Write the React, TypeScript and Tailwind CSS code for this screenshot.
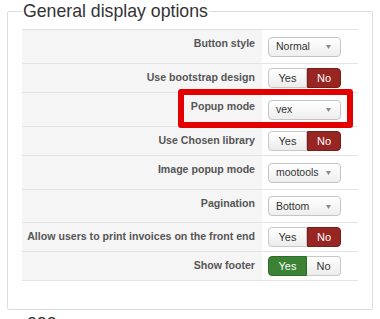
import React from "react";

type Row =
  | { label: string; kind: "select"; value: string; h: string }
  | { label: string; kind: "toggle"; yes: boolean; h: string };

const rows: Row[] = [
  { label: "Button style", kind: "select", value: "Normal", h: "h-[34px]" },
  { label: "Use bootstrap design", kind: "toggle", yes: false, h: "h-[29px]" },
  { label: "Popup mode", kind: "select", value: "vex", h: "h-[34px]" },
  { label: "Use Chosen library", kind: "toggle", yes: false, h: "h-[29px]" },
  { label: "Image popup mode", kind: "select", value: "mootools", h: "h-[34px]" },
  { label: "Pagination", kind: "select", value: "Bottom", h: "h-[33px]" },
  { label: "Allow users to print invoices on the front end", kind: "toggle", yes: false, h: "h-[29px]" },
  { label: "Show footer", kind: "toggle", yes: true, h: "h-[29px]" },
];

function Select({ value }: { value: string }) {
  return (
    <div className="flex h-[20px] w-[73px] items-center justify-between rounded-[4px] border border-[#c4c4c4] bg-gradient-to-b from-white to-[#eeeeee] pl-[7px] pr-[9px] text-[10.5px] text-[#333] shadow-[inset_0_1px_0_rgba(255,255,255,0.8)]">
      <span className="leading-none">{value}</span>
      <svg width="5" height="4" viewBox="0 0 5 4" className="mt-[1px]">
        <path d="M0 0 L5 0 L2.5 4 Z" fill="#8a8a8a" />
      </svg>
    </div>
  );
}

function Toggle({ yes }: { yes: boolean }) {
  return (
    <div className="flex h-[20px] text-[11px] leading-none">
      <div
        className={
          yes
            ? "flex w-[39px] items-center justify-center rounded-l-[4px] border border-[#2f6b2a] bg-[#3b8235] text-white"
            : "flex w-[39px] items-center justify-center rounded-l-[4px] border border-[#c8c8c8] bg-gradient-to-b from-white to-[#ececec] text-[#333]"
        }
      >
        Yes
      </div>
      <div
        className={
          yes
            ? "flex w-[34px] items-center justify-center rounded-r-[4px] border border-l-0 border-[#c8c8c8] bg-gradient-to-b from-white to-[#ececec] text-[#333]"
            : "flex w-[34px] items-center justify-center rounded-r-[4px] border border-[#7a1c1a] bg-[#972622] text-white"
        }
      >
        No
      </div>
    </div>
  );
}

export default function App() {
  return (
    <div
      className="relative h-[319px] w-[380px] overflow-hidden bg-white"
      style={{ fontFamily: '"Liberation Sans", Arial, Helvetica, sans-serif' }}
    >
      <div className="pl-[7px] pr-[7px]">
        <fieldset className="rounded-[2px] border border-[#dcdcdc] px-[14px] pb-[28px] pt-[7px]">
          <legend className="px-[1px] text-[17.7px] leading-[22px] text-[#333]">General display options</legend>
          <div className="border-b border-[#e3e3e3]">
            {rows.map((r) => (
              <div key={r.label} className={`flex border-t border-[#e3e3e3] ${r.h}`}>
                <div className="w-[240px] whitespace-nowrap bg-[#f5f5f5] pr-[7px] pt-[4px] text-right text-[10.6px] font-bold leading-[18px] text-[#555]">
                  {r.label}
                </div>
                <div className="flex flex-1 items-center pl-[6px]">
                  {r.kind === "select" ? <Select value={r.value} /> : <Toggle yes={r.yes} />}
                </div>
              </div>
            ))}
          </div>
        </fieldset>
        <div className="pl-[20px] text-[17.7px] leading-[22px] text-[#333]">ooo</div>
      </div>
      <div className="absolute left-[178px] top-[89px] h-[39px] w-[175px] rounded-[3px] border-[6px] border-[#e30000]" />
    </div>
  );
}
